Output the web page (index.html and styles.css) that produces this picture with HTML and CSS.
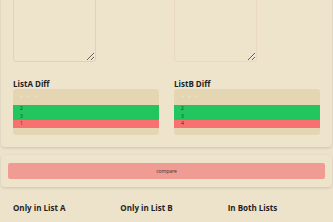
FILE: index.html
```html
<!DOCTYPE html>
<html lang="en">
<head>
    <meta charset="UTF-8">
    <meta name="viewport" content="width=device-width, initial-scale=1.0">
    <title>List Diff</title>
    <link rel="stylesheet" href="styles.css">
</head>
<body>
    <div class="page">
        <!-- Inputs and per-list diffs -->
        <section class="card inputs">
            <div class="col">
                <textarea class="list-input active">1
2
3</textarea>
                <h3>ListA Diff</h3>
                <div class="diff">
                    <div class="diff-head"><span class="dot"></span><span class="dot"></span><span class="dot"></span></div>
                    <div class="row same">2</div>
                    <div class="row same">3</div>
                    <div class="row removed">1</div>
                </div>
            </div>
            <div class="col">
                <textarea class="list-input">2
3
4</textarea>
                <h3>ListB Diff</h3>
                <div class="diff">
                    <div class="diff-head"><span class="dot"></span><span class="dot"></span><span class="dot"></span></div>
                    <div class="row same">2</div>
                    <div class="row same">3</div>
                    <div class="row removed">4</div>
                </div>
            </div>
        </section>

        <section class="card actions">
            <button type="button" class="compare-btn">compare</button>
        </section>

        <!-- Results -->
        <section class="results">
            <div>
                <h3>Only in List A</h3>
                <ul><li>1</li></ul>
            </div>
            <div>
                <h3>Only in List B</h3>
                <ul><li>4</li></ul>
            </div>
            <div>
                <h3>In Both Lists</h3>
                <ul><li>2</li><li>3</li></ul>
            </div>
        </section>
    </div>

    <script>
        // la vista está desplazada hasta los resultados
        window.scrollTo(0, 100);
    </script>
</body>
</html>
```

FILE: styles.css
```css
/* General */
body {
    font-family: 'Open Sans', 'Liberation Sans', sans-serif;
    background-color: #ede3cb;
    margin: 0;
    padding: 0;
    color: #222;
}

.page {
    padding-bottom: 120px;
}

.card {
    margin: 0 1px;
    background: #eee4cc;
    border-radius: 4px;
    box-shadow: 0 1px 3px rgba(0, 0, 0, 0.14);
}

.inputs {
    display: grid;
    grid-template-columns: 1fr 1fr;
    gap: 15px;
    padding: 12px;
}

.list-input {
    display: block;
    box-sizing: border-box;
    width: 83px;
    height: 150px;
    background: transparent;
    border: 1px solid #e8d9c0;
    border-radius: 3px;
    color: transparent;
    font-size: 5px;
}

.list-input.active {
    border-color: #edcbb9;
}

h3 {
    font-size: 8px;
    line-height: 10px;
    font-weight: 700;
    margin: 17px 0 0;
}

.diff {
    background-color: #e4d6b2;
    border-radius: 3px;
    padding-bottom: 7px;
    font-size: 5px;
}

.diff-head {
    display: flex;
    gap: 4px;
    padding: 6px 7px 7px;
    height: 3px;
}

.dot {
    width: 3px;
    height: 3px;
    border-radius: 50%;
    background: #e9ddc2;
}

.row {
    line-height: 7.7px;
    padding-left: 7px;
    color: #333;
}

.row.same {
    background-color: #22c55e;
}

.row.removed {
    background-color: #f87171;
}

.actions {
    margin-top: 8px;
    padding: 8px 7px;
}

.compare-btn {
    display: block;
    width: 100%;
    height: 16px;
    background-color: #f09b94;
    border: none;
    border-radius: 2px;
    font-family: inherit;
    font-size: 5px;
    color: #333;
    cursor: pointer;
}

.results {
    display: grid;
    grid-template-columns: repeat(3, 1fr);
    gap: 15px;
    padding: 0 13px;
}

.results h3 {
    margin-top: 16px;
}

.results ul {
    list-style: none;
    margin: 30px 0 0;
    padding: 0;
    font-size: 6px;
}
```
